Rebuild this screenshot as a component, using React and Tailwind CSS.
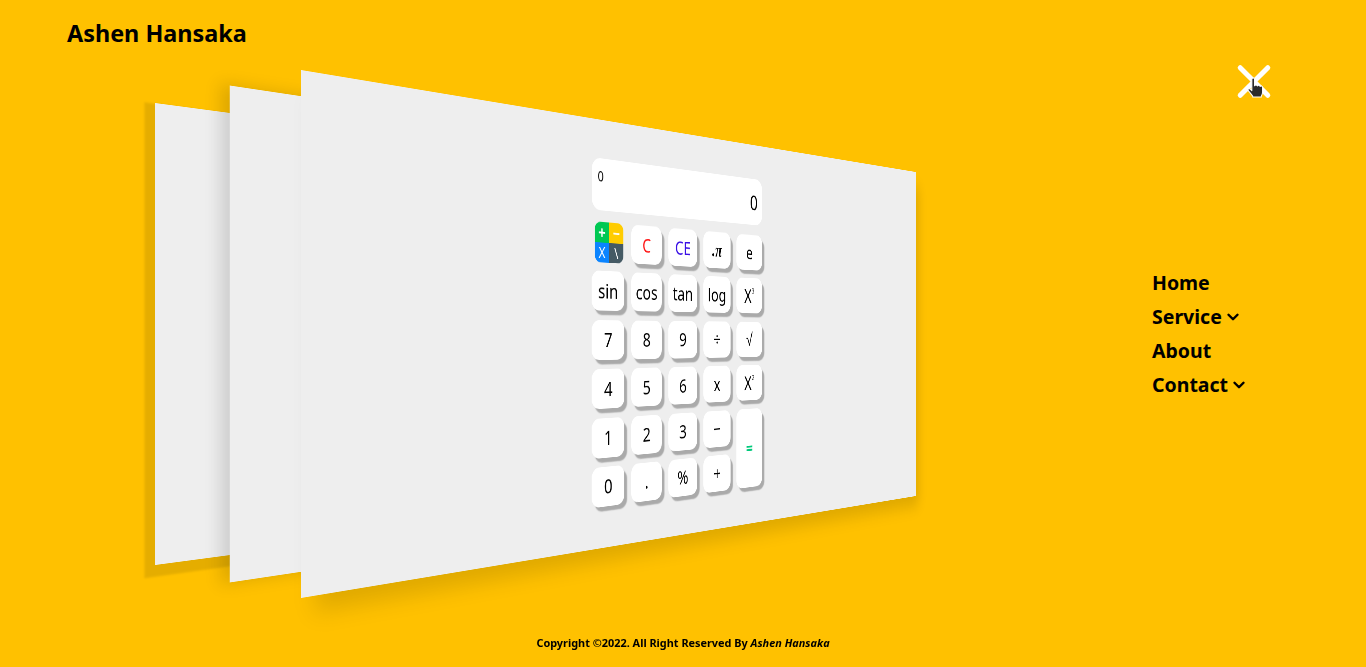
import React from "react";
import { ChevronDown } from "lucide-react";

const shadow = "shadow-[6px_7px_2px_#aaaaaa]";
const F = "[font-family:'Noto_Sans',sans-serif]";

function Key({ children, className = "" }) {
  return (
    <div className={`flex items-center justify-center rounded-[15px] bg-white text-[31px] leading-none ${shadow} ${className}`}>
      {children}
    </div>
  );
}

function Sup({ n }) {
  return (
    <span className="flex items-start text-[33px]">
      X<span className="text-[13px] leading-[14px]">{n}</span>
    </span>
  );
}

function Calculator() {
  return (
    <div className="mb-[4px] ml-[4px] flex w-[400px] flex-col gap-[18px] text-black">
      <div className="flex h-[81px] flex-col rounded-[18px] bg-white px-3 pt-[17px]">
        <div className="text-[22px] leading-5">0</div>
        <div className="-mt-[13px] text-right text-[36px] leading-none">0</div>
      </div>
      <div className="grid grid-cols-[repeat(5,68px)] grid-rows-[repeat(6,62px)] gap-x-[15px] gap-y-[14.4px]">
        <div className="ml-[6px] grid h-[63px] w-[60px] grid-cols-2 grid-rows-2 overflow-hidden rounded-xl text-[26px] leading-none text-white">
          <div className="flex items-center justify-center bg-[#00c853] font-bold">+</div>
          <div className="flex items-center justify-center bg-[#ffcc00] font-bold">−</div>
          <div className="flex items-center justify-center bg-[#0a84ff] text-[24px]">X</div>
          <div className="flex items-center justify-center bg-[#455a64] text-[24px]">\</div>
        </div>
        <Key className="text-[#ff1a1a]">C</Key>
        <Key className="text-[#3a10e5]">CE</Key>
        <Key className="font-bold italic [font-family:'Liberation_Serif',serif]">.π</Key>
        <Key>e</Key>

        <Key>sin</Key>
        <Key>cos</Key>
        <Key>tan</Key>
        <Key>log</Key>
        <Key><Sup n="3" /></Key>

        <Key>7</Key>
        <Key>8</Key>
        <Key>9</Key>
        <Key>÷</Key>
        <Key>√</Key>

        <Key>4</Key>
        <Key>5</Key>
        <Key>6</Key>
        <Key>x</Key>
        <Key><Sup n="2" /></Key>

        <Key>1</Key>
        <Key>2</Key>
        <Key>3</Key>
        <Key>−</Key>
        <Key className="row-span-2 font-bold text-[#00c97b]">=</Key>

        <Key>0</Key>
        <Key>.</Key>
        <Key>%</Key>
        <Key>+</Key>
      </div>
    </div>
  );
}

function Hand() {
  return (
    <svg width="24" height="25" viewBox="0 0 22 24" className="absolute left-[1244px] top-[76px]">
      <path
        d="M7 3.2c0-1.6 2.6-1.6 2.6 0V9.4c.3-1.2 2.5-1.2 2.7.2.3-1.1 2.4-1 2.6.4.4-.9 2.3-.6 2.4.8v4.9c0 1.6-.5 2.6-1.2 3.5v.9H7.8v-.9c-1-1-1.6-2.2-3-3.7L3.6 14c-1-1.2.6-2.6 1.9-1.4L7 14z"
        fill="#2b2b2b"
        stroke="#fff"
        strokeWidth="1"
        strokeLinejoin="round"
      />
    </svg>
  );
}

export default function App() {
  return (
    <div className={`relative h-[667px] w-[1366px] overflow-hidden bg-[#ffc100] text-black ${F}`}>
      <div className="absolute left-0 top-0 h-[667px] w-[1366px] origin-top-left bg-[#eeeeee] shadow-[-7px_9px_3px_8px_rgba(0,0,0,0.1)] [transform:matrix3d(0.763,0.13474,0,0.0004034,0,0.6927,0,0,0,0,1,0,155,103,0,1)]" />
      <div className="absolute left-0 top-0 h-[667px] w-[1366px] origin-top-left bg-[#eeeeee] shadow-[-12px_0_22px_rgba(0,0,0,0.14)] [transform:matrix3d(0.821,0.14496,0,0.000434,0,0.7451,0,0,0,0,1,0,229.7,85.5,0,1)]" />
      <div className="absolute left-0 top-0 flex h-[667px] w-[1366px] origin-top-left items-center justify-center bg-[#eeeeee] shadow-[15px_25px_30px_-5px_rgba(0,0,0,0.13)] [transform:matrix3d(0.8724,0.154,0,0.000461,0,0.7916,0,0,0,0,1,0,301,70,0,1)]">
        <Calculator />
      </div>

      <header className="absolute left-[67px] top-[15px] text-[23.4px] font-bold leading-9">Ashen Hansaka</header>

      <div className="absolute left-[1232px] top-[79px]">
        <span className="absolute left-0 top-0 h-[5px] w-11 rotate-45 rounded-full bg-white" />
        <span className="absolute left-0 top-0 h-[5px] w-11 -rotate-45 rounded-full bg-white" />
      </div>
      <Hand />

      <nav className="absolute left-[1152px] top-[266px] flex flex-col text-[19.5px] font-bold leading-[34px]">
        <a>Home</a>
        <a className="flex items-center gap-[2px]">Service <ChevronDown size={18} strokeWidth={3.2} /></a>
        <a>About</a>
        <a className="flex items-center gap-[2px]">Contact <ChevronDown size={18} strokeWidth={3.2} /></a>
      </nav>

      <footer className="absolute bottom-[16px] left-0 w-full text-center text-[10.9px] font-bold leading-4">
        Copyright ©2022. All Right Reserved By <i>Ashen Hansaka</i>
      </footer>
    </div>
  );
}
